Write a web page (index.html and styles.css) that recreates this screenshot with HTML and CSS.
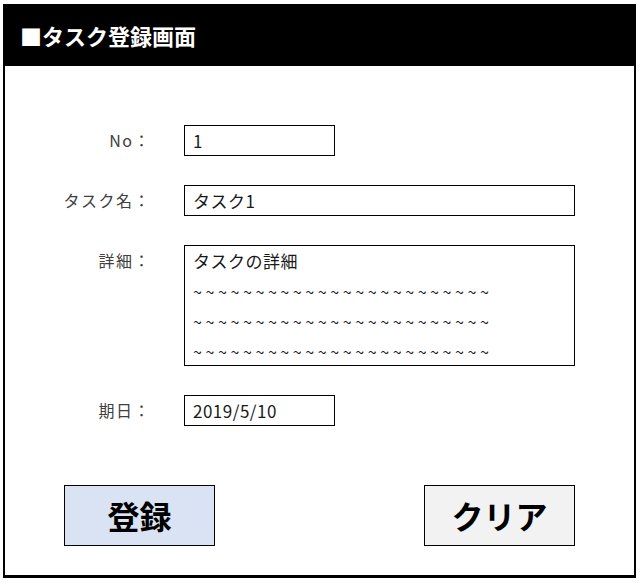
FILE: index.html
```html
<!DOCTYPE html>
<html lang="ja">
<head>
  <meta charset="UTF-8" />
  <title>タスク登録画面</title>
  <link rel="stylesheet" href="styles.css">
</head>
<body>
  <div class="frame">
    <div class="header">■タスク登録画面</div>
    <div class="content">
      <div class="row">
        <div class="label">No：</div>
        <div class="field short">1</div>
      </div>
      <div class="row">
        <div class="label">タスク名：</div>
        <div class="field wide">タスク1</div>
      </div>
      <div class="row">
        <div class="label">詳細：</div>
        <div class="field wide detail">
          <div>タスクの詳細</div>
          <div class="tilde">~~~~~~~~~~~~~~~~~~~~~~~~</div>
          <div class="tilde">~~~~~~~~~~~~~~~~~~~~~~~~</div>
          <div class="tilde">~~~~~~~~~~~~~~~~~~~~~~~~</div>
        </div>
      </div>
      <div class="row">
        <div class="label">期日：</div>
        <div class="field short">2019/5/10</div>
      </div>
      <div class="buttons">
        <button class="btn register">登録</button>
        <button class="btn clear">クリア</button>
      </div>
    </div>
  </div>
</body>
</html>
```

FILE: styles.css
```css
* { box-sizing: border-box; }
body {
  margin: 0;
  background: #fff;
  font-family: "Noto Sans CJK JP", "Liberation Sans", sans-serif;
}
.frame {
  width: 633px;
  height: 574px;
  margin: 4px 0 0 3px;
  border: 2px solid #000;
  border-top: none;
  border-bottom-width: 3px;
}
.header {
  height: 62px;
  margin: 0 -2px;
  background: #000;
  color: #fff;
  font-size: 22px;
  font-weight: bold;
  line-height: 62px;
  padding-left: 17px;
}
.content {
  padding: 59px 0 0 0;
}
.row {
  display: grid;
  grid-template-columns: 146px 1fr;
  column-gap: 33px;
  margin-bottom: 29px;
}
.label {
  text-align: right;
  font-size: 16px;
  color: #404040;
  line-height: 31px;
  letter-spacing: 1.5px;
}
.field {
  border: 1px solid #000;
  height: 31px;
  font-size: 17px;
  letter-spacing: 0.5px;
  line-height: 29px;
  padding-left: 8px;
  color: #1a1a1a;
}
.short { width: 151px; }
.wide { width: 391px; }
.detail {
  height: 121px;
  line-height: 30px;
}
.tilde {
  font-size: 16px;
  letter-spacing: 3.6px;
}
.buttons {
  display: flex;
  justify-content: space-between;
  padding: 30px 59px 0 59px;
}
.btn {
  width: 151px;
  height: 61px;
  border: 1px solid #000;
  font-family: "Noto Sans CJK JP", sans-serif;
  font-size: 32px;
  font-weight: bold;
  color: #000;
  padding: 0;
  line-height: 59px;
}
.register { background: #dae3f3; }
.clear { background: #f2f2f2; }
```
